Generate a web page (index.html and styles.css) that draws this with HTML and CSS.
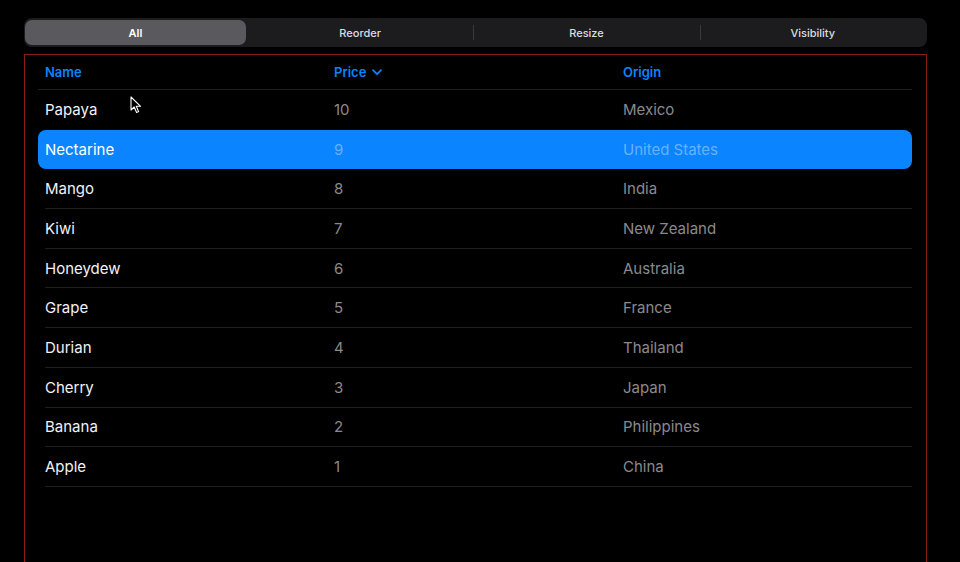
FILE: index.html
```html
<!DOCTYPE html>
<html>
<head>
<meta charset="utf-8">
<link rel="stylesheet" href="styles.css">
</head>
<body>
<div class="seg">
  <div class="seg-item selected">All</div>
  <div class="seg-item">Reorder</div>
  <div class="seg-item div">Resize</div>
  <div class="seg-item div">Visibility</div>
</div>
<div class="frame">
  <div class="table">
    <div class="row head">
      <div class="cell">Name</div>
      <div class="cell">Price <svg class="chev" width="10" height="7" viewBox="0 0 10 7"><path d="M1 1.2 L5 5.2 L9 1.2" fill="none" stroke="#0a84ff" stroke-width="1.7" stroke-linecap="round" stroke-linejoin="round"/></svg></div>
      <div class="cell">Origin</div>
    </div>
    <div class="row before-sel"><div class="cell name">Papaya</div><div class="cell sub">10</div><div class="cell sub">Mexico</div></div>
    <div class="row sel"><div class="cell name">Nectarine</div><div class="cell sub">9</div><div class="cell sub">United States</div></div>
    <div class="row"><div class="cell name">Mango</div><div class="cell sub">8</div><div class="cell sub">India</div></div>
    <div class="row"><div class="cell name">Kiwi</div><div class="cell sub">7</div><div class="cell sub">New Zealand</div></div>
    <div class="row"><div class="cell name">Honeydew</div><div class="cell sub">6</div><div class="cell sub">Australia</div></div>
    <div class="row"><div class="cell name">Grape</div><div class="cell sub">5</div><div class="cell sub">France</div></div>
    <div class="row"><div class="cell name">Durian</div><div class="cell sub">4</div><div class="cell sub">Thailand</div></div>
    <div class="row"><div class="cell name">Cherry</div><div class="cell sub">3</div><div class="cell sub">Japan</div></div>
    <div class="row"><div class="cell name">Banana</div><div class="cell sub">2</div><div class="cell sub">Philippines</div></div>
    <div class="row"><div class="cell name">Apple</div><div class="cell sub">1</div><div class="cell sub">China</div></div>
  </div>
</div>
<svg class="cursor" width="12" height="18" viewBox="0 0 12 18"><path d="M1 1 L1 14 L4.2 11 L6.6 16.5 L8.6 15.6 L6.3 10.3 L10.6 10.3 Z" fill="#000" stroke="#fff" stroke-width="1.1" stroke-linejoin="round"/></svg>
</body>
</html>
```
FILE: styles.css
```css
* { box-sizing: border-box; }
html, body { margin: 0; background: #000; }
body {
  width: 960px;
  height: 562px;
  overflow: hidden;
  padding: 18px 33px 0 24px;
  font-family: Inter, "Noto Sans", sans-serif;
  position: relative;
}
.seg {
  display: grid;
  grid-template-columns: 222px repeat(3, 1fr);
  height: 29px;
  background: #1c1c1e;
  border-radius: 8px;
  padding: 2px 1px;
}
.seg-item {
  display: flex;
  align-items: center;
  justify-content: center;
  color: #dcdce0;
  font-size: 11px;
  font-weight: 500;
  position: relative;
}
.seg-item.selected {
  background: #5a5a5e;
  border-radius: 7px;
  margin-right: 1px;
  color: #fff;
  font-weight: 600;
}
.seg-item.div::before {
  content: "";
  position: absolute;
  left: 0;
  top: 5px;
  bottom: 5px;
  width: 1px;
  background: #3a3a3c;
}
.frame {
  margin-top: 7px;
  border: 1px solid #8c1b1b;
  border-bottom: none;
  height: 520px;
  padding: 0 14px 0 13px;
}
.row {
  display: grid;
  grid-template-columns: 289px 289px 1fr;
  height: 39.7px;
  align-items: center;
  margin-left: 7px;
  border-bottom: 1px solid #1f1f21;
  font-size: 15px;
}
.row.head {
  height: 35px;
  margin-left: 0;
  padding-left: 7px;
  font-size: 13px;
  font-weight: 600;
  color: #0a84ff;
}
.head .cell { display: flex; align-items: center; gap: 6px; }
.chev { margin-top: 1px; }
.name { color: #f2f2f7; }
.sub { color: #8a8a8e; }
.row.before-sel { border-bottom-color: transparent; }
.row.sel {
  margin-left: 0;
  padding-left: 7px;
  background: #0a84ff;
  border-radius: 8px;
  border-bottom-color: transparent;
}
.row.sel .name { color: #fff; }
.row.sel .sub { color: rgba(225, 235, 250, 0.45); }
.cursor {
  position: absolute;
  left: 130px;
  top: 96px;
}
```
